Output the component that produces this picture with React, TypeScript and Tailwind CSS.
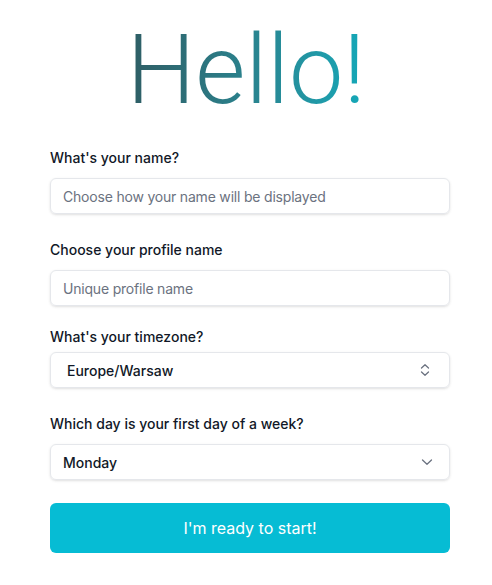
import React from "react";

export default function App() {
  const font = { fontFamily: "Inter, 'Noto Sans', sans-serif" };
  return (
    <div className="w-[492px] h-[585px] bg-white flex flex-col" style={font}>
      <div className="h-[124px] pt-[17px] flex justify-center">
        <h1
          className="text-[97px] leading-[107px] font-light bg-gradient-to-r from-[#2e5d64] to-[#12a8b8] bg-clip-text text-transparent"
          style={{ fontFamily: "Roboto, 'Liberation Sans', sans-serif" }}
        >
          Hello!
        </h1>
      </div>
      <div className="w-[400px] ml-[50px] mt-[24px] flex flex-col">
        <label className="text-[14px] leading-[20px] font-medium text-[#111827]">What's your name?</label>
        <div className="mt-[10px] h-[36px] rounded-md border border-[#e5e7eb] shadow-sm flex items-center px-[12px] text-[14px] tracking-[-0.2px] text-[#6b7280]">
          Choose how your name will be displayed
        </div>
        <label className="mt-[26px] text-[14px] leading-[20px] font-medium text-[#111827]">Choose your profile name</label>
        <div className="mt-[10px] h-[36px] rounded-md border border-[#e5e7eb] shadow-sm flex items-center px-[12px] text-[14px] tracking-[-0.2px] text-[#6b7280]">
          Unique profile name
        </div>
        <label className="mt-[21px] text-[14px] leading-[20px] font-medium text-[#111827]">What's your timezone?</label>
        <div className="mt-[5px] h-[36px] rounded-md border border-[#e5e7eb] shadow-sm flex items-center justify-between pl-[16px] pr-[18px] text-[14px] font-medium text-[#111827]">
          <span>Europe/Warsaw</span>
          <svg width="12" height="14" viewBox="0 0 12 14" fill="none" stroke="#6b7280" strokeWidth="1.3" strokeLinecap="round" strokeLinejoin="round">
            <path d="M2.5 5 L6 1.8 L9.5 5" />
            <path d="M2.5 9 L6 12.2 L9.5 9" />
          </svg>
        </div>
        <label className="mt-[26px] text-[14px] leading-[20px] font-medium text-[#111827]">Which day is your first day of a week?</label>
        <div className="mt-[10px] h-[36px] rounded-md border border-[#e5e7eb] shadow-sm flex items-center justify-between pl-[12px] pr-[16px] text-[14px] font-medium text-[#111827]">
          <span>Monday</span>
          <svg width="12" height="8" viewBox="0 0 12 8" fill="none" stroke="#6b7280" strokeWidth="1.3" strokeLinecap="round" strokeLinejoin="round">
            <path d="M1.5 2 L6 6.2 L10.5 2" />
          </svg>
        </div>
        <button className="mt-[23px] h-[50px] rounded-md bg-[#06bcd4] text-white text-[16px] flex items-center justify-center">
          I'm ready to start!
        </button>
      </div>
    </div>
  );
}
